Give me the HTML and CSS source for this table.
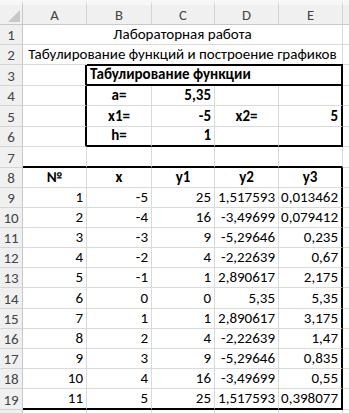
FILE: index.html
```html
<!DOCTYPE html>
<html lang="ru">
<head>
<meta charset="utf-8">
<link rel="stylesheet" href="styles.css">
</head>
<body>
<div class="sheet">
  <div class="corner"><svg width="12" height="12" viewBox="0 0 12 12"><polygon points="12,0 12,12 0,12" fill="#c8c8c8"/></svg></div>
  <div class="ch">A</div><div class="ch">B</div><div class="ch">C</div><div class="ch">D</div><div class="ch">E</div><div class="ch blank"></div>

  <div class="rh">1</div><div class="c m s5">Лабораторная работа</div><div class="c"></div>
  <div class="rh">2</div><div class="c m s5">Табулирование функций и построение графиков</div><div class="c"></div>

  <div class="rh">3</div><div class="c tr"></div><div class="c b s4 tt tb tr">Табулирование функции</div><div class="c"></div>
  <div class="rh">4</div><div class="c tr"></div><div class="c b m">a=</div><div class="c b r">5,35</div><div class="c"></div><div class="c tr"></div><div class="c"></div>
  <div class="rh">5</div><div class="c tr"></div><div class="c b m">x1=</div><div class="c b r">-5</div><div class="c b m">x2=</div><div class="c b r tr">5</div><div class="c"></div>
  <div class="rh">6</div><div class="c tr"></div><div class="c b m tb">h=</div><div class="c b r tb">1</div><div class="c tb"></div><div class="c tb tr"></div><div class="c"></div>
  <div class="rh">7</div><div class="c tb"></div><div class="c tb"></div><div class="c tb"></div><div class="c tb"></div><div class="c tb"></div><div class="c"></div>

  <div class="rh">8</div><div class="c b m">№</div><div class="c b m">x</div><div class="c b m">y1</div><div class="c b m">y2</div><div class="c b m tr">y3</div><div class="c"></div>
  <div class="rh">9</div><div class="c r">1</div><div class="c r">-5</div><div class="c r">25</div><div class="c r">1,517593</div><div class="c r tr">0,013462</div><div class="c"></div>
  <div class="rh">10</div><div class="c r">2</div><div class="c r">-4</div><div class="c r">16</div><div class="c r">-3,49699</div><div class="c r tr">0,079412</div><div class="c"></div>
  <div class="rh">11</div><div class="c r">3</div><div class="c r">-3</div><div class="c r">9</div><div class="c r">-5,29646</div><div class="c r tr">0,235</div><div class="c"></div>
  <div class="rh">12</div><div class="c r">4</div><div class="c r">-2</div><div class="c r">4</div><div class="c r">-2,22639</div><div class="c r tr">0,67</div><div class="c"></div>
  <div class="rh">13</div><div class="c r">5</div><div class="c r">-1</div><div class="c r">1</div><div class="c r">2,890617</div><div class="c r tr">2,175</div><div class="c"></div>
  <div class="rh">14</div><div class="c r">6</div><div class="c r">0</div><div class="c r">0</div><div class="c r">5,35</div><div class="c r tr">5,35</div><div class="c"></div>
  <div class="rh">15</div><div class="c r">7</div><div class="c r">1</div><div class="c r">1</div><div class="c r">2,890617</div><div class="c r tr">3,175</div><div class="c"></div>
  <div class="rh">16</div><div class="c r">8</div><div class="c r">2</div><div class="c r">4</div><div class="c r">-2,22639</div><div class="c r tr">1,47</div><div class="c"></div>
  <div class="rh">17</div><div class="c r">9</div><div class="c r">3</div><div class="c r">9</div><div class="c r">-5,29646</div><div class="c r tr">0,835</div><div class="c"></div>
  <div class="rh">18</div><div class="c r">10</div><div class="c r">4</div><div class="c r">16</div><div class="c r">-3,49699</div><div class="c r tr">0,55</div><div class="c"></div>
  <div class="rh">19</div><div class="c r tb">11</div><div class="c r tb">5</div><div class="c r tb">25</div><div class="c r tb">1,517593</div><div class="c r tb tr">0,398077</div><div class="c"></div>
  <div class="rh"></div><div class="c"></div><div class="c"></div><div class="c"></div><div class="c"></div><div class="c"></div><div class="c"></div>
</div>
</body>
</html>
```

FILE: styles.css
```css
html, body {
  margin: 0;
  padding: 0;
  background: #ffffff;
}
.sheet {
  width: 349px;
  height: 414px;
  overflow: hidden;
  display: grid;
  grid-template-columns: 23px 64px 65px 63px 64px 64px 1fr;
  grid-template-rows: 25px 20px 20px 21px 20px 21px 20px 21px 20px 20px 20px 20px 20px 20px 21px 20px 20px 20px 20px 21px 1fr;
  font-family: "Carlito", Roboto, "Liberation Sans", sans-serif;
  font-size: 15px;
  color: #000;
}
.corner {
  background: #f0f0f0;
  border-top: 5px solid #f7f7f7;
  border-right: 1px solid #c8c8c8;
  border-bottom: 1px solid #c8c8c8;
  box-sizing: border-box;
  display: flex;
  align-items: flex-end;
  justify-content: flex-end;
  padding: 0 2px 2px 0;
}
.ch {
  background: #f0f0f0;
  border-top: 5px solid #f7f7f7;
  border-right: 1px solid #d4d4d4;
  border-bottom: 1px solid #c8c8c8;
  box-sizing: border-box;
  display: flex;
  align-items: center;
  justify-content: center;
  padding-top: 1px;
  color: #444;
  font-size: 14.67px;
}
.ch.blank {
  border-right: 0;
}
.rh {
  background: #f0f0f0;
  border-right: 1px solid #c8c8c8;
  border-bottom: 1px solid #d4d4d4;
  box-sizing: border-box;
  display: flex;
  align-items: center;
  justify-content: center;
  padding-top: 1px;
  color: #444;
  font-size: 15px;
}
.c {
  border-right: 1px solid #dadada;
  border-bottom: 1px solid #dadada;
  box-sizing: border-box;
  display: flex;
  align-items: flex-end;
  padding: 0 3px 1px 3px;
  white-space: nowrap;
  line-height: 18px;
  min-width: 0;
}
.r { justify-content: flex-end; }
.m { justify-content: center; }
.b { font-weight: bold; }
.s5 { grid-column: span 5; }
.s4 { grid-column: span 4; }
.tr { border-right: 2px solid #000; }
.tb { border-bottom: 2px solid #000; }
.tt { border-top: 2px solid #000; }
.s4.tt { margin-top: -1px; }
```
